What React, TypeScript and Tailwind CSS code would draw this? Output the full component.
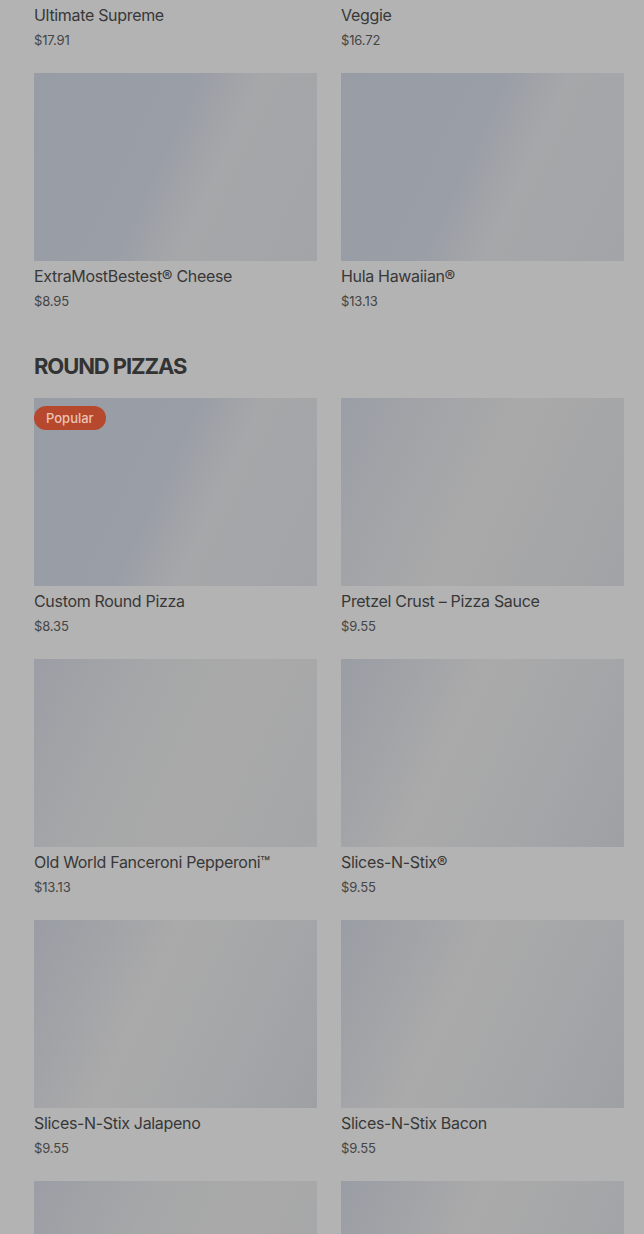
import React from 'react';

interface Item {
  name: string;
  price: string;
  popular?: boolean;
  shade: number;
}

// shimmer variants, spelled out so tailwind picks them up
const shades = [
  'bg-[linear-gradient(115deg,#989ca5_0%,#9a9ea6_45%,#a6a7a9_62%,#a3a4a7_100%)]',
  'bg-[linear-gradient(115deg,#9a9ea6_0%,#a4a5a8_30%,#a9a9a9_50%,#a2a3a6_100%)]',
  'bg-[linear-gradient(115deg,#9b9ea5_0%,#a6a7a8_35%,#a9a9a9_60%,#a5a6a8_100%)]',
  'bg-[linear-gradient(115deg,#9a9da5_0%,#a2a3a7_20%,#aaaaaa_40%,#a5a6a8_70%,#9fa0a4_100%)]',
];

const topRow: Item[] = [
  { name: 'Ultimate Supreme', price: '$17.91', shade: 0 },
  { name: 'Veggie', price: '$16.72', shade: 0 },
  { name: 'ExtraMostBestest® Cheese', price: '$8.95', shade: 0 },
  { name: 'Hula Hawaiian®', price: '$13.13', shade: 0 },
];

const roundPizzas: Item[] = [
  { name: 'Custom Round Pizza', price: '$8.35', popular: true, shade: 0 },
  { name: 'Pretzel Crust – Pizza Sauce', price: '$9.55', shade: 1 },
  { name: 'Old World Fanceroni Pepperoni™', price: '$13.13', shade: 2 },
  { name: 'Slices-N-Stix®', price: '$9.55', shade: 3 },
  { name: 'Slices-N-Stix Jalapeno', price: '$9.55', shade: 3 },
  { name: 'Slices-N-Stix Bacon', price: '$9.55', shade: 3 },
  { name: '', price: '', shade: 2 },
  { name: '', price: '', shade: 3 },
];

const Card = ({ item }: { item: Item }) => (
  <div className="flex flex-col">
    <div className={`relative h-[188px] w-full ${shades[item.shade]}`}>
      {item.popular && (
        <span className="absolute left-0 top-[8px] rounded-full bg-[#b6482d] px-3 text-[13px] font-medium leading-[24px] text-[#ebc3b7]">
          Popular
        </span>
      )}
    </div>
    <p className="mt-[5px] text-[16px] leading-[20px] tracking-[-0.02em] text-[#383838]">{item.name}</p>
    <p className="mt-[6px] text-[13px] leading-[18px] tracking-[-0.01em] text-[#454545]">{item.price}</p>
  </div>
);

export default function App() {
  return (
    <div className="h-[1234px] overflow-hidden bg-[#b3b3b3] pl-[34px] pr-[20px] font-['Inter','Liberation_Sans',sans-serif]">
      <div className="-mt-[188px] grid grid-cols-2 gap-x-6 gap-y-6">
        {topRow.map((item) => (
          <Card key={item.name} item={item} />
        ))}
      </div>

      <h2 className="mt-[42px] mb-[18px] text-[22px] font-bold leading-[28px] tracking-[-0.05em] text-[#333333]">
        ROUND PIZZAS
      </h2>

      <div className="grid grid-cols-2 gap-x-6 gap-y-6">
        {roundPizzas.map((item, i) => (
          <Card key={i} item={item} />
        ))}
      </div>
    </div>
  );
}
